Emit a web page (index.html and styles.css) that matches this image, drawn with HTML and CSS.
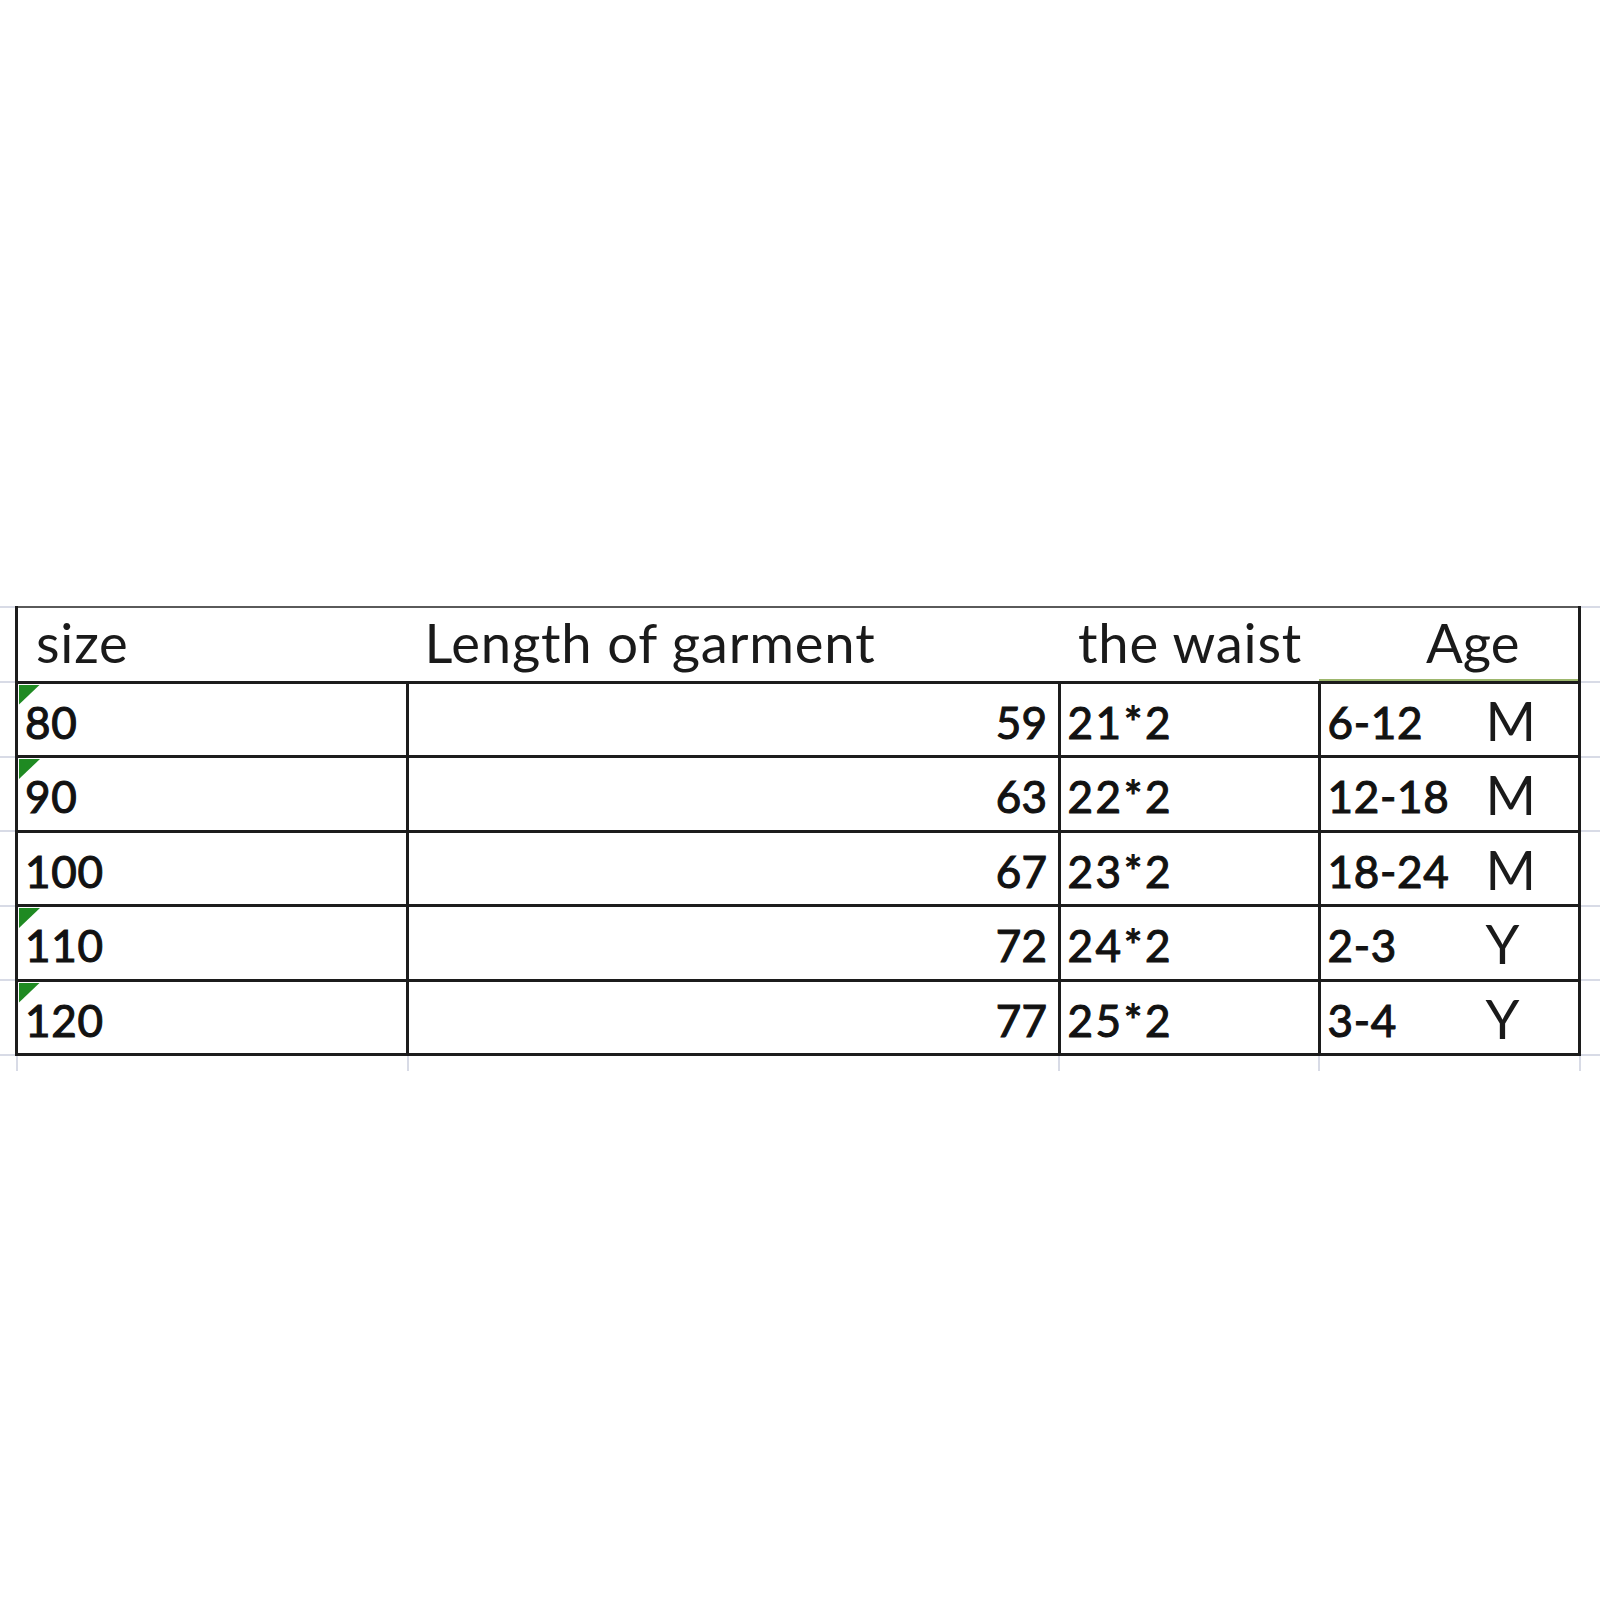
FILE: index.html
```html
<!DOCTYPE html>
<html lang="en">
<head>
<meta charset="utf-8">
<title>Size chart</title>
<link rel="stylesheet" href="styles.css">
</head>
<body>
<div class="page">
  <table class="sheet">
    <colgroup>
      <col class="c-stub-l">
      <col class="c-size">
      <col class="c-length">
      <col class="c-waist">
      <col class="c-age">
      <col class="c-stub-r">
    </colgroup>
    <tr class="head">
      <td class="stub"></td>
      <td class="h h-size">size</td>
      <td class="h h-length">Length of garment</td>
      <td class="h h-waist">the waist</td>
      <td class="h h-age">Age</td>
      <td class="stub"></td>
    </tr>
    <tr class="row">
      <td class="stub"></td>
      <td class="cell size flag">80</td>
      <td class="cell length">59</td>
      <td class="cell waist">21*2</td>
      <td class="cell age"><div class="age-in"><span class="range">6-12</span><span class="unit">M</span></div></td>
      <td class="stub"></td>
    </tr>
    <tr class="row">
      <td class="stub"></td>
      <td class="cell size flag">90</td>
      <td class="cell length">63</td>
      <td class="cell waist">22*2</td>
      <td class="cell age"><div class="age-in"><span class="range">12-18</span><span class="unit">M</span></div></td>
      <td class="stub"></td>
    </tr>
    <tr class="row">
      <td class="stub"></td>
      <td class="cell size">100</td>
      <td class="cell length">67</td>
      <td class="cell waist">23*2</td>
      <td class="cell age"><div class="age-in"><span class="range">18-24</span><span class="unit">M</span></div></td>
      <td class="stub"></td>
    </tr>
    <tr class="row">
      <td class="stub"></td>
      <td class="cell size flag">110</td>
      <td class="cell length">72</td>
      <td class="cell waist">24*2</td>
      <td class="cell age"><div class="age-in"><span class="range">2-3</span><span class="unit">Y</span></div></td>
      <td class="stub"></td>
    </tr>
    <tr class="row">
      <td class="stub"></td>
      <td class="cell size flag">120</td>
      <td class="cell length">77</td>
      <td class="cell waist">25*2</td>
      <td class="cell age"><div class="age-in"><span class="range">3-4</span><span class="unit">Y</span></div></td>
      <td class="stub"></td>
    </tr>
    <tr class="tail">
      <td class="stub"></td>
      <td class="t"></td>
      <td class="t"></td>
      <td class="t"></td>
      <td class="t t-last"></td>
      <td class="stub"></td>
    </tr>
  </table>
</div>
</body>
</html>
```

FILE: styles.css
```css
html, body {
  margin: 0;
  padding: 0;
  background: #ffffff;
}

.page {
  width: 1600px;
  height: 1600px;
  padding-top: 606px;
  box-sizing: border-box;
  overflow: hidden;
}

.sheet {
  width: 1600px;
  border-collapse: collapse;
  table-layout: fixed;
  font-family: "Lato", "Open Sans", sans-serif;
  color: #151515;
}

.c-stub-l { width: 16.5px; }
.c-size { width: 391px; }
.c-length { width: 651.5px; }
.c-waist { width: 260px; }
.c-age { width: 260.5px; }
.c-stub-r { width: 20.5px; }

td {
  padding: 0;
  white-space: nowrap;
  vertical-align: top;
}

/* faint spreadsheet gridlines outside the table */
.stub {
  border-top: 2px solid #d8dbe6;
  border-bottom: 2px solid #d8dbe6;
}

/* header */
.head { height: 75px; }

.h {
  font-size: 54.4px;
  line-height: 54px;
  letter-spacing: 0.8px;
  padding-top: 7px;
  border-top: 2px solid #5a5a5a;
  border-bottom: 3px solid #1c1c1c;
  color: #1a1a1a;
}

.h-size { padding-left: 18px; border-left: 3px solid #1c1c1c; }
.h-length { padding-left: 17px; }
.h-waist { padding-left: 19px; }
.h-age {
  padding-left: 107px;
  letter-spacing: 0;
  border-right: 3px solid #1c1c1c;
  box-shadow: inset 0 -2px 0 #9db76d;
}

/* body rows */
.row { height: 74.5px; }

.cell {
  position: relative;
  font-size: 44px;
  line-height: 44px;
  letter-spacing: 0.7px;
  padding-top: 16px;
  border: 3px solid #1c1c1c;
  color: #121212;
  -webkit-text-stroke: 1.1px #121212;
}

.size { padding-left: 7px; }
.length { text-align: right; padding-right: 10px; letter-spacing: 0.4px; }
.waist { padding-left: 7px; letter-spacing: 2.6px; }
.age { padding-left: 7px; }

.flag::before {
  content: "";
  position: absolute;
  left: 1px;
  top: 1px;
  width: 21px;
  height: 20px;
  background: #1f8a22;
  clip-path: polygon(0 0, 100% 0, 0 100%);
}

.age-in {
  display: flex;
  align-items: flex-start;
  height: 44px;
}

.range {
  width: 158px;
  flex: none;
  line-height: 44px;
}

.unit {
  font-size: 54.4px;
  line-height: 40px;
  letter-spacing: 0;
  -webkit-text-stroke: 0;
  color: #1a1a1a;
}

/* faint stubs below the table */
.tail { height: 16px; }

.t {
  border-left: 2px solid #d8dbe6;
}

.t-last {
  border-right: 2px solid #d8dbe6;
}

.tail .stub {
  border: none;
}
```
